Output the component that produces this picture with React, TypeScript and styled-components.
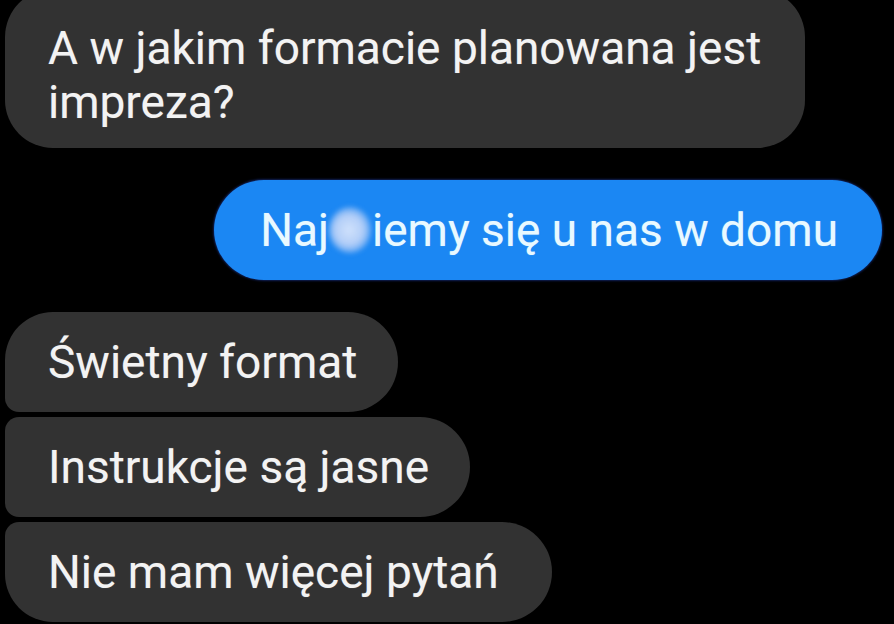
import React from "react";
import styled, { createGlobalStyle } from "styled-components";

const GlobalStyle = createGlobalStyle`
  html, body {
    margin: 0;
    padding: 0;
    background: #000;
    overflow: hidden;
  }
  body {
    width: 894px;
    height: 624px;
    font-family: Roboto, "Noto Sans", "Liberation Sans", sans-serif;
  }
`;

const Thread = styled.div`
  display: flex;
  flex-direction: column;
  align-items: flex-start;
  width: 894px;
  height: 624px;
  overflow: hidden;
  padding-left: 5px;
  box-sizing: border-box;
`;

type Shape = "single" | "first" | "middle" | "last";

const radii: Record<Shape, string> = {
  single: "48px",
  first: "48px 50px 50px 14px",
  middle: "14px 50px 50px 14px",
  last: "14px 50px 50px 48px",
};

const Bubble = styled.div<{ $shape: Shape; $padRight?: number }>`
  box-sizing: border-box;
  background: #323232;
  color: #f3f3f3;
  font-size: 46px;
  line-height: 54px;
  padding: 23px ${(p) => p.$padRight ?? 41}px 23px 43px;
  border-radius: ${(p) => radii[p.$shape]};
  text-shadow: 0 0 1px rgba(255, 255, 255, 0.35);
  white-space: nowrap;
`;

const QuestionBubble = styled(Bubble)`
  width: 800px;
  margin-top: -11px;
  padding-top: 32px;
  padding-bottom: 19px;
`;

const OwnRow = styled.div`
  align-self: stretch;
  display: flex;
  justify-content: flex-end;
  padding-right: 12px;
  margin: 32px 0 32px;
`;

const OwnBubble = styled.div`
  box-sizing: border-box;
  height: 100px;
  display: flex;
  align-items: center;
  background: #1b87f3;
  color: #e9f9ff;
  font-size: 46px;
  padding: 0 44px 0 46px;
  border-radius: 50px;
  box-shadow: 0 0 2px 1px rgba(20, 40, 110, 0.8);
  text-shadow: 0 0 1px rgba(220, 250, 255, 0.5);
  white-space: nowrap;
`;

const Censor = styled.span`
  display: inline-block;
  flex: none;
  width: 42px;
  height: 46px;
  margin: 0 1px 0 0;
  border-radius: 50%;
  background: radial-gradient(
    ellipse at 48% 50%,
    rgba(218, 230, 252, 0.95) 0%,
    rgba(200, 216, 248, 0.88) 45%,
    rgba(130, 178, 242, 0.4) 78%,
    rgba(27, 135, 243, 0) 100%
  );
  filter: blur(2.5px);
`;

const Stack = styled.div`
  display: flex;
  flex-direction: column;
  align-items: flex-start;
  gap: 5px;
`;

const GroupBubble = styled(Bubble)`
  height: 100px;
  display: flex;
  align-items: center;
  padding-top: 0;
  padding-bottom: 0;
`;

export default function App() {
  return (
    <>
      <GlobalStyle />
      <Thread>
        <QuestionBubble $shape="single">
          A w jakim formacie planowana jest
          <br />
          impreza?
        </QuestionBubble>
        <OwnRow>
          <OwnBubble>
            Naj
            <Censor aria-hidden="true" />
            iemy się u nas w domu
          </OwnBubble>
        </OwnRow>
        <Stack>
          <GroupBubble $shape="first">Świetny format</GroupBubble>
          <GroupBubble $shape="middle">Instrukcje są jasne</GroupBubble>
          <GroupBubble $shape="last" $padRight={53}>
            Nie mam więcej pytań
          </GroupBubble>
        </Stack>
      </Thread>
    </>
  );
}
